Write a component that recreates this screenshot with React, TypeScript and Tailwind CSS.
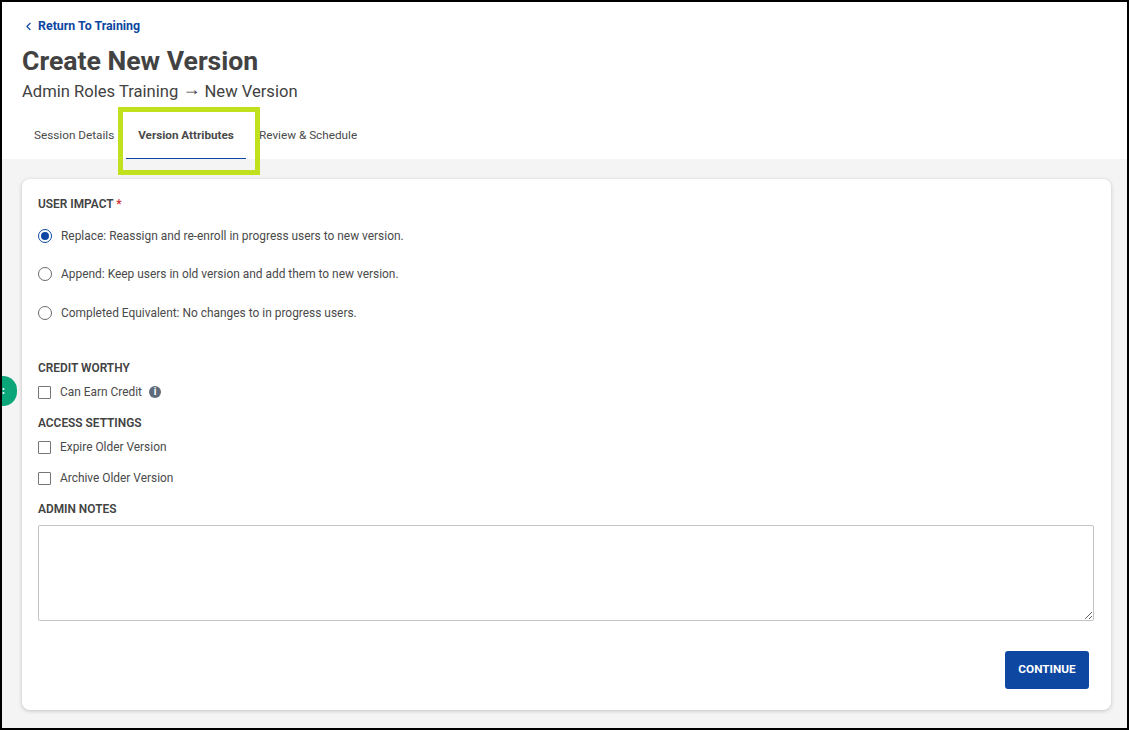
import { ChevronLeft } from 'lucide-react';

function Radio({ label, checked }: { label: string; checked?: boolean }) {
  return (
    <label className="flex items-center h-[18px]">
      <span
        className={
          checked
            ? 'w-[14px] h-[14px] rounded-full border-[1.5px] border-[#0d47a1] flex items-center justify-center'
            : 'w-[14px] h-[14px] rounded-full border-[1.5px] border-[#6b6b6b]'
        }
      >
        {checked && <span className="w-[8px] h-[8px] rounded-full bg-[#0d47a1]" />}
      </span>
      <span className="ml-[9px] pt-[2px] text-[11.93px] text-[#4a4a4a]">{label}</span>
    </label>
  );
}

function Check({ label, children }: { label: string; children?: React.ReactNode }) {
  return (
    <label className="flex items-center h-[18px]">
      <span className="w-[13px] h-[13px] border-[1.5px] border-[#757575] rounded-[1px]" />
      <span className="ml-[9px] pt-[2px] text-[11.9px] text-[#4a4a4a]">{label}</span>
      {children}
    </label>
  );
}

function Heading({ children }: { children: React.ReactNode }) {
  return <div className="h-[16px] text-[11.9px] font-semibold text-[#424242] leading-[16px]">{children}</div>;
}

export default function App() {
  return (
    <div className="relative w-[1129px] h-[730px] overflow-hidden border-2 border-black bg-[#f4f4f4] font-['Roboto',sans-serif] flex flex-col">
      <div className="bg-white h-[157px] shrink-0 pl-[20px] relative">
        <div className="flex items-center pt-[16px] h-[32px] text-[12.4px] font-bold text-[#0d47a1]">
          <ChevronLeft size={13} strokeWidth={2} />
          <span className="ml-[3px]">Return To Training</span>
        </div>
        <h1 className="mt-[10px] text-[26.6px] leading-[34px] font-bold text-[#424242]">Create New Version</h1>
        <div className="mt-[3px] h-[22px] text-[16.6px] leading-[22px] text-[#424242]">
          Admin Roles Training <span className="font-['Liberation_Sans'] text-[18px] leading-[0px] align-[2px]">→</span> New Version
        </div>
        <div className="flex mt-[24px] text-[11.75px] text-[#4a4a4a] leading-[16px]">
          <div className="w-[104px] pl-[12px]">Session Details</div>
          <div className="w-[120px] h-[32px] text-center font-bold text-[11.7px] border-b border-[#0d47a1]">Version Attributes</div>
          <div className="pl-[13px]">Review &amp; Schedule</div>
        </div>
        <div className="absolute left-[116px] top-[105px] w-[142px] h-[68px] border-[5px] border-[#c1e01e]" />
      </div>

      <div className="mt-[20px] ml-[20px] w-[1089px] h-[531px] bg-white rounded-[8px] shadow-[0_1px_4px_rgba(0,0,0,0.2)] pl-[16px] pr-[17px] pt-[17px]">
        <Heading>
          USER IMPACT <span className="text-[#d32f2f]">*</span>
        </Heading>
        <div className="mt-[15px] flex flex-col gap-[20px]">
          <Radio checked label="Replace: Reassign and re-enroll in progress users to new version." />
          <Radio label="Append: Keep users in old version and add them to new version." />
          <div className="mt-[1px]">
            <Radio label="Completed Equivalent: No changes to in progress users." />
          </div>
        </div>
        <div className="mt-[38px]">
          <Heading>CREDIT WORTHY</Heading>
        </div>
        <div className="mt-[7px]">
          <Check label="Can Earn Credit">
            <span className="ml-[7px] w-[12px] h-[12px] rounded-full bg-[#5f6b7a] text-white text-[10px] font-bold leading-[12px] text-center">i</span>
          </Check>
        </div>
        <div className="mt-[14px]">
          <Heading>ACCESS SETTINGS</Heading>
        </div>
        <div className="mt-[7px] flex flex-col gap-[13px]">
          <Check label="Expire Older Version" />
          <Check label="Archive Older Version" />
        </div>
        <div className="mt-[14px]">
          <Heading>ADMIN NOTES</Heading>
        </div>
        <textarea className="block mt-[8px] w-full h-[96px] border border-[#c4c4c4] rounded-[2px] bg-white resize-y" />
        <div className="flex justify-end mt-[30px] pr-[5px]">
          <button className="w-[84px] h-[38px] rounded-[3px] bg-[#0d47a1] text-white text-[11.75px] font-bold">CONTINUE</button>
        </div>
      </div>

      <div className="absolute left-[-13px] top-[374px] w-[28px] h-[30px] rounded-full bg-[#0aa67a] flex items-center justify-end pr-[12px]">
        <svg width="3" height="6" viewBox="0 0 3 6"><circle cx="1.5" cy="1" r="1" fill="#fff" /><circle cx="1.5" cy="5" r="1" fill="#fff" /></svg>
      </div>
    </div>
  );
}
